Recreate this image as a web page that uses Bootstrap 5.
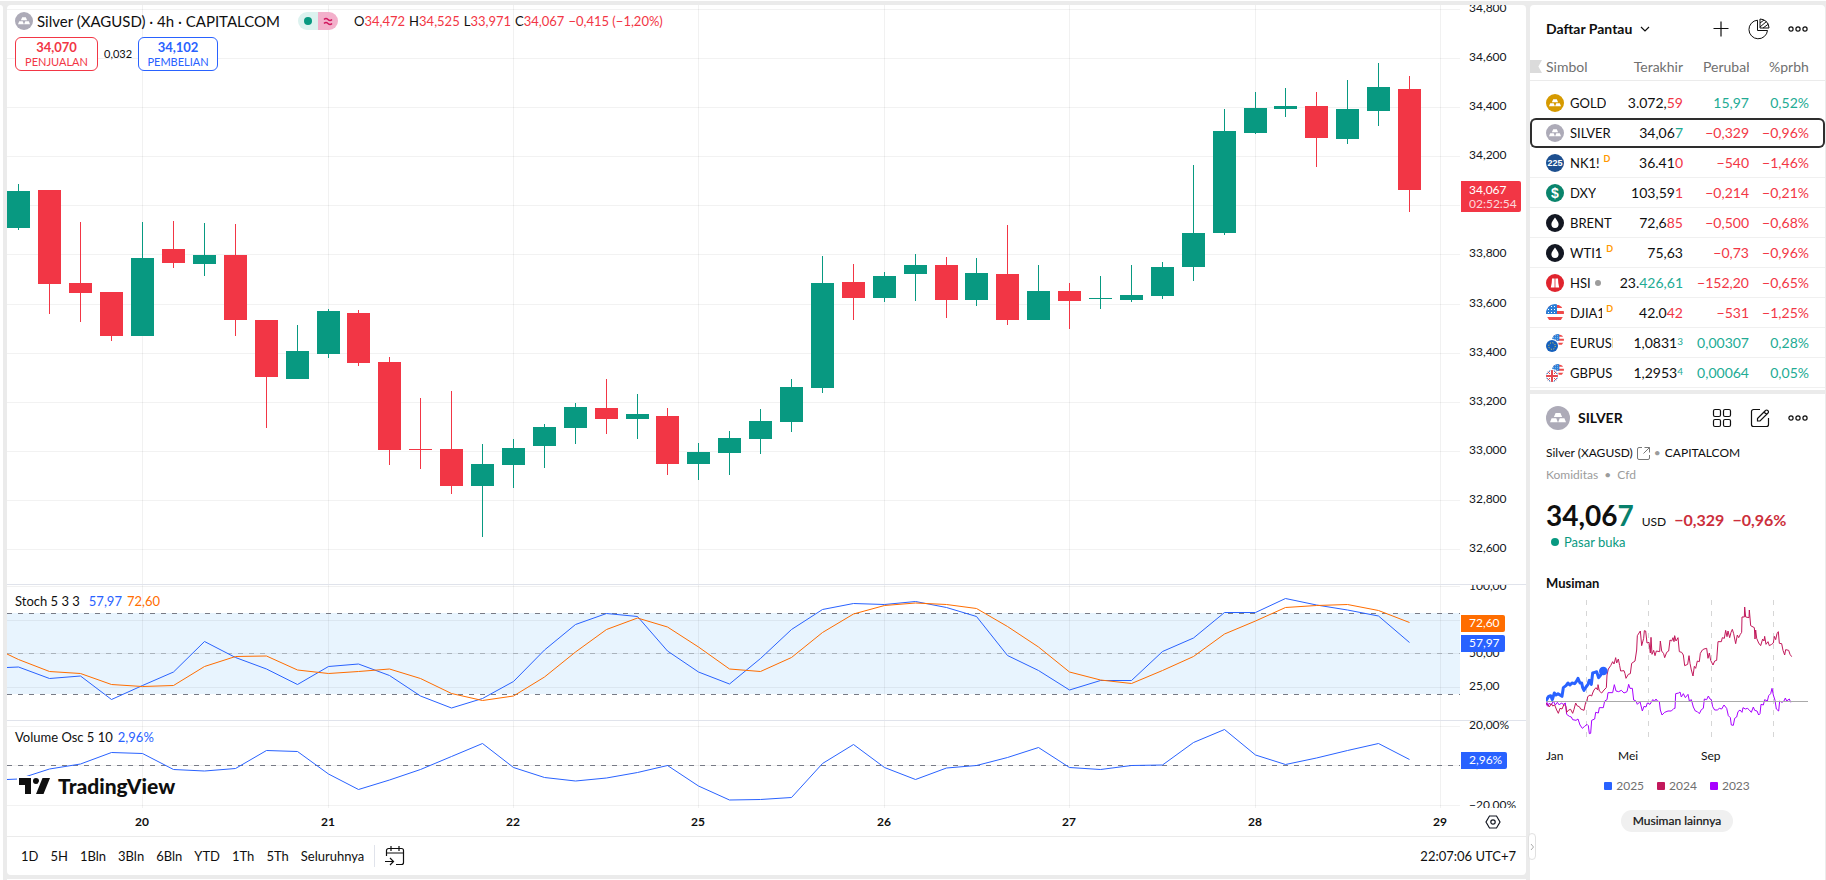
<!DOCTYPE html>
<html lang="id">
<head>
<meta charset="utf-8">
<meta name="viewport" content="width=device-width, initial-scale=1">
<title>Silver (XAGUSD) 34,067</title>
<link href="https://cdn.jsdelivr.net/npm/bootstrap@5.3.0/dist/css/bootstrap.min.css" rel="stylesheet">
<style>
:root{--up:#089981;--down:#f23645;--blue:#2962ff;--orange:#ff6d00;--ink:#0f0f0f;--frame:#ebebeb}
body{font-family:"Trebuchet MS",Lato,"Open Sans",sans-serif;font-size:14px;line-height:18px;color:var(--ink);background:var(--frame);overflow:hidden}
.workspace{border-top:1px solid #fff;padding:4px 1px 0 0;gap:4px}
.tool-edge{width:3px;border-top-right-radius:4px}
.panel{background:#fff;border-radius:4px;overflow:hidden}
.bottom-edge{height:1px;background:#fff}
.fs-12{font-size:12px;line-height:16px}
.fs-13{font-size:13px;line-height:16px}
.up{color:#22ab94}.down{color:#f23645}.blue{color:var(--blue)}.orange{color:var(--orange)}
svg{display:block;flex:none}
button{color:inherit;font:inherit}
.plain{background:none;border:0;padding:0}
/* chart */
.pane{position:relative;min-height:0;overflow:hidden}
.pane+.pane{border-top:1px solid #e0e3eb}
.pane-main{flex:1 1 0}
.pane-stoch{flex:0 0 136px}
.pane-vol{flex:0 0 88px}
.plot{position:relative;flex:1 1 0;min-width:0}
.plot>svg{width:100%;height:100%;position:absolute;inset:0}
.axis{position:relative;width:66px;font-size:12px;line-height:16px;color:#131722}
.axis span,.time-plot span{position:absolute;margin-top:-9px;left:9px}
.axis .tag{left:1px;padding:0 5px 1px 8px;color:#fff;border-radius:0 2px 2px 0;line-height:16px}
.axis .tag small{display:block;font-size:12px;line-height:14px;opacity:.8}
.axis .tag-price{padding:1px 4px 1px 8px;line-height:15px;margin-top:-15px}
.legend{position:absolute;left:8px;z-index:1}
.legend-main{top:6px}
.symbol-title{font-size:15px;line-height:20px;margin-right:2px}
.legend-stoch,.legend-vol{top:8px;gap:5px}
.status{width:20px;height:18px;display:flex;align-items:center;justify-content:center}
.status-open{background:#dcf2ef;border-radius:9px 0 0 9px}
.status-delay{background:#f3b0cb;border-radius:0 9px 9px 0}
.deal{gap:6px;margin-top:6px}
.spread{font-size:11px}
.quote{width:80px;height:34px;border:1px solid;border-radius:6px;background:#fff;line-height:14px;padding:0;font-size:11px}
.quote.sell{width:83px}
.quote b{display:block;font-size:13px;line-height:15px}
.brand{position:absolute;left:12px;bottom:9px;font-size:21px;line-height:26px;font-weight:900}
.time-axis{height:28px;font-size:12px;line-height:16px}
.time-plot{position:relative;flex:1 1 0}
.time-plot span{top:14px;width:40px;margin-left:-20px;text-align:center;font-weight:700;left:auto;margin-top:-8px}
.range-bar{height:39px;border-top:1px solid var(--frame);padding:0 10px 0 14px;gap:10px;font-size:13px}
.ranges{gap:12px}
.rule{width:1px;height:22px;background:#e0e3eb}
/* right column */
.side{width:295px;gap:4px;position:relative}
.watch{flex:0 0 385px;border-radius:4px 4px 0 0}
.watch-head{height:48px;padding:0 17px 0 16px}
.tools{gap:18px}
.quotes{table-layout:fixed;width:100%;border-collapse:separate;border-spacing:0;white-space:nowrap}
.quotes th{font-weight:400;color:#707070;height:28px;padding:0;border-bottom:1px solid var(--frame);vertical-align:middle}
.quotes tbody td{height:30px;padding:0;border-bottom:1px solid #f0f0f0;text-align:right}
.quotes tbody tr:first-child td{height:37px;padding-top:7px;border-bottom:0}
.quotes th:last-child,.quotes tbody td:last-child{padding-right:16px}
.quotes tbody .picked td{border:2px solid #2e2e2e;border-width:2px 0}
.quotes tbody .picked td:first-child{border-left-width:2px;border-radius:6px 0 0 6px}
.quotes tbody .picked td:last-child{border-right-width:2px;border-radius:0 6px 6px 0;padding-right:14px}
.picked .sym{margin-left:-2px}
.clip{display:block;overflow:hidden;margin-left:auto;text-align:left}
.sym{padding-left:16px;overflow:hidden;font-size:13px}
.ticker{overflow:hidden;margin-left:6px}
.flag-mark{width:12px;height:13px;background:#dbdbdb;clip-path:polygon(0 0,100% 0,70% 50%,100% 100%,0 100%);margin-right:4px}
.quotes sup{top:0;vertical-align:top;font-size:10px;line-height:14px}
.delay{color:#ff9800;font-weight:700;font-size:9px;line-height:9px;align-self:flex-start;margin-left:4px}
.detail{flex:1 1 0;border-radius:0;padding:12px 17px 0 16px}
.grey{color:#9c9c9c}
.full-name{margin-top:15px}
.kind{margin-top:6px}
.price{font-size:28px;line-height:32px;font-weight:700}
.change{font-size:16px;font-weight:700;color:#cc2f3c;margin-left:8px}
.market{color:#089981;margin-top:3px}
.section-title{font-size:13px;line-height:18px}
.season svg{width:100%;height:137px}
.months{padding-top:11px}
.months span{width:83px}
.months span:first-child{width:72px}
.years{gap:13px;margin-top:14px;color:#707070}
.swatch{width:8px;height:8px;border-radius:1px}
.more{background:#f0f0f0;border-radius:11px;height:22px;padding:0 12px;font-size:12px;line-height:20px;-webkit-text-stroke:.2px}
.handle{position:absolute;left:-2px;bottom:20px;width:8px;height:27px;border:1px solid #e0e0e0;border-radius:4px;background:#fff}
</style>
</head>
<body>
<svg width="0" height="0" class="position-absolute" aria-hidden="true">
  <symbol id="bars" viewBox="0 0 18 18"><path fill="#fff" d="M7.200 5.200h3.600l1.300 3H5.900zM4.200 9.200h3.500l1.200 3H3zM10.300 9.200h3.500l1.200 3H9.100z"/></symbol>
  <symbol id="us" viewBox="0 0 18 18"><path fill="#fff" d="M0 0h18v18H0z"/><path fill="#ef4b4b" d="M0 0h18v3H0zM0 6h18v3H0zM0 12h18v3H0z" transform="translate(0 1)"/><path fill="#2a7fd8" d="M0 0h11v10H0z"/><path stroke="#fff" stroke-width="1" stroke-dasharray="1 2" d="M2 2.500h9M2 5.500h9M2 8.500h9"/></symbol>
  <symbol id="dots" viewBox="0 0 20 8"><g fill="none" stroke="#0f0f0f" stroke-width="1.200"><circle cx="3" cy="4" r="2.100"/><circle cx="10" cy="4" r="2.100"/><circle cx="17" cy="4" r="2.100"/></g></symbol>
  <clipPath id="round"><circle cx="9" cy="9" r="9"/></clipPath>
  <clipPath id="r6"><circle cx="12" cy="6" r="6"/></clipPath>
  <clipPath id="r6b"><circle cx="6" cy="12" r="6"/></clipPath>
</svg>

<div class="workspace d-flex vh-100">
  <div class="tool-edge bg-white"></div>

  <main class="d-flex flex-column flex-grow-1" style="min-width:0">
    <section class="panel d-flex flex-column flex-grow-1" style="min-height:0">
      <div class="pane pane-main d-flex">
        <div class="plot">
          <svg id="plotMain" viewBox="7 5 1453 579" preserveAspectRatio="none"></svg>
          <div class="legend legend-main">
            <div class="d-flex align-items-center">
              <svg width="18" height="18" viewBox="0 0 18 18"><circle cx="9" cy="9" r="9" fill="#adabb8"/><use href="#bars" width="18" height="18"/></svg>
              <span class="symbol-title ms-1">Silver (XAGUSD) · 4h · CAPITALCOM</span>
              <span class="d-flex ms-3">
                <span class="status status-open"><svg width="8" height="8"><circle cx="4" cy="4" r="4" fill="#089981"/></svg></span>
                <span class="status status-delay"><svg width="10" height="10" fill="none" stroke="#d1175e" stroke-width="1.500"><path d="M1 3.500q2-2 4 0t4 0M1 7.500q2-2 4 0t4 0"/></svg></span>
              </span>
              <span class="fs-13 d-flex gap-1 ms-3"><span>O<span class="down">34,472</span></span><span>H<span class="down">34,525</span></span><span>L<span class="down">33,971</span></span><span>C<span class="down">34,067</span></span><span class="down">−0,415 (−1,20%)</span></span>
            </div>
            <div class="deal d-flex align-items-center">
              <button type="button" class="quote sell down"><b>34,070</b>PENJUALAN</button>
              <span class="spread">0,032</span>
              <button type="button" class="quote blue"><b>34,102</b>PEMBELIAN</button>
            </div>
          </div>
        </div>
        <div class="axis" id="axisMain"></div>
      </div>
      <div class="pane pane-stoch d-flex">
        <div class="plot">
          <svg id="plotStoch" viewBox="7 585 1453 135" preserveAspectRatio="none"></svg>
          <div class="legend legend-stoch fs-13 d-flex"><span>Stoch 5 3 3</span><span class="blue ms-1">57,97</span><span class="orange">72,60</span></div>
        </div>
        <div class="axis" id="axisStoch"></div>
      </div>
      <div class="pane pane-vol d-flex">
        <div class="plot">
          <svg id="plotVol" viewBox="7 721 1453 87" preserveAspectRatio="none"></svg>
          <div class="legend legend-vol fs-13 d-flex"><span>Volume Osc 5 10</span><span class="blue">2,96%</span></div>
          <div class="brand d-flex align-items-center gap-2">
            <svg width="31" height="16" viewBox="0 0 31 16" fill="#0f0f0f" stroke="#fff" stroke-width="4" paint-order="stroke" overflow="visible"><path d="M0 0h12v16H6V7H0z"/><circle cx="17" cy="3" r="3"/><path d="M23.500 0H31l-6.500 16H17z"/></svg>
            <span>TradingView</span>
          </div>
        </div>
        <div class="axis" id="axisVol"></div>
      </div>
      <div class="time-axis d-flex">
        <div class="time-plot" id="timeAxis"></div>
        <div class="axis d-flex align-items-center justify-content-center">
          <button type="button" class="plain" aria-label="Pengaturan skala"><svg width="16" height="14" viewBox="0 0 16 14" fill="none" stroke="#131722" stroke-width="1.200"><path d="M4.500 1h7L15 7l-3.500 6h-7L1 7z"/><circle cx="8" cy="7" r="2.200"/></svg></button>
        </div>
      </div>
      <div class="range-bar d-flex align-items-center">
        <div class="ranges d-flex">
          <button type="button" class="plain">1D</button><button type="button" class="plain">5H</button><button type="button" class="plain">1Bln</button><button type="button" class="plain">3Bln</button><button type="button" class="plain">6Bln</button><button type="button" class="plain">YTD</button><button type="button" class="plain">1Th</button><button type="button" class="plain">5Th</button><button type="button" class="plain">Seluruhnya</button>
        </div>
        <span class="rule"></span>
        <button type="button" class="plain" aria-label="Pergi ke tanggal"><svg width="20" height="20" viewBox="0 0 20 20" fill="none" stroke="#0f0f0f" stroke-width="1.200"><path d="M1.500 10V4.500a2 2 0 0 1 2-2h13a2 2 0 0 1 2 2v12a2 2 0 0 1-2 2H11M1.500 7h17M6 0v5M14 0v5M0 15.500h8M5 12l3.500 3.500L5 19"/></svg></button>
        <button type="button" class="plain ms-auto">22:07:06 UTC+7</button>
      </div>
    </section>
    <div class="bottom-edge mt-1"></div>
  </main>

  <aside class="side d-flex flex-column flex-shrink-0">
    <section class="panel watch">
      <header class="watch-head d-flex align-items-center">
        <button type="button" class="plain fw-bold d-flex align-items-center gap-2">Daftar Pantau <svg width="10" height="6" viewBox="0 0 10 6" fill="none" stroke="#0f0f0f" stroke-width="1.200"><path d="M1 1l4 4 4-4"/></svg></button>
        <div class="tools d-flex align-items-center ms-auto">
          <button type="button" class="plain" aria-label="Tambah simbol"><svg width="18" height="18" viewBox="0 0 18 18" stroke="#0f0f0f" stroke-width="1.200"><path d="M9 1.500v15M1.500 8.500h15"/></svg></button>
          <button type="button" class="plain" aria-label="Tampilan lanjutan"><svg width="22" height="22" viewBox="0 0 22 22" fill="none" stroke="#0f0f0f"><path d="M9.500 2.200a9.300 9.300 0 1 0 10 10.300h-10z"/><path d="M12 1a9 9 0 0 1 9 9h-9zM12 5l4-3M12 9l6.500-5.500M15 10l5.500-4"/></svg></button>
          <button type="button" class="plain" aria-label="Menu"><svg width="20" height="8"><use href="#dots"/></svg></button>
        </div>
      </header>
      <table class="quotes">
        <colgroup><col style="width:83px"><col style="width:70px"><col style="width:66px"><col style="width:76px"></colgroup>
        <thead><tr>
          <th><span class="d-flex align-items-center"><span class="flag-mark"></span>Simbol</span></th>
          <th class="text-end">Terakhir</th>
          <th><span class="clip" style="width:46px">Perubahan</span></th>
          <th><span class="clip" style="width:40px">%prbhn</span></th>
        </tr></thead>
        <tbody id="rows"></tbody>
      </table>
    </section>

    <section class="panel detail">
      <header class="d-flex align-items-center">
        <svg width="24" height="24" viewBox="0 0 18 18"><circle cx="9" cy="9" r="9" fill="#adabb8"/><use href="#bars" width="18" height="18"/></svg>
        <b class="ms-2">SILVER</b>
        <div class="tools d-flex align-items-center ms-auto">
          <button type="button" class="plain" aria-label="Kisi"><svg width="20" height="20" viewBox="0 0 20 20" fill="none" stroke="#0f0f0f" stroke-width="1.200"><rect x="1.500" y="1.500" width="7" height="7" rx="1.500"/><rect x="11.500" y="1.500" width="7" height="7" rx="1.500"/><rect x="1.500" y="11.500" width="7" height="7" rx="1.500"/><rect x="11.500" y="11.500" width="7" height="7" rx="1.500"/></svg></button>
          <button type="button" class="plain" aria-label="Catatan"><svg width="20" height="20" viewBox="0 0 20 20" fill="none" stroke="#0f0f0f" stroke-width="1.200"><path d="M10 1.500H3.500a2 2 0 0 0-2 2v13a2 2 0 0 0 2 2h13a2 2 0 0 0 2-2V10"/><path d="M7.500 10.500l8-8a1.500 1.500 0 0 1 2.200 0l.3.300a1.500 1.500 0 0 1 0 2.200l-8 8H7.500zM14 4l2.500 2.500"/></svg></button>
          <button type="button" class="plain" aria-label="Menu"><svg width="20" height="8"><use href="#dots"/></svg></button>
        </div>
      </header>
      <div class="full-name d-flex align-items-center fs-12 gap-1">
        <a href="#" class="d-flex align-items-center text-reset text-decoration-none gap-1">Silver (XAGUSD) <svg width="13" height="13" viewBox="0 0 13 13" fill="none" stroke="#777" stroke-width="1"><path d="M5 .5H2A1.500 1.500 0 0 0 .5 2v9A1.500 1.500 0 0 0 2 12.500h9a1.500 1.500 0 0 0 1.500-1.500V8M7.500.5h5v5M12.500.5l-6 6"/></svg></a>
        <span class="grey">•</span><span>CAPITALCOM</span>
      </div>
      <div class="kind fs-12 grey">Komiditas&nbsp; •&nbsp; Cfd</div>
      <div class="d-flex align-items-baseline mt-3">
        <span class="price">34,06<span style="color:#08806c">7</span></span>
        <span class="fs-12 ms-2">USD</span>
        <span class="change">−0,329</span><span class="change">−0,96%</span>
      </div>
      <div class="market d-flex align-items-center fs-13 ps-1 gap-1"><svg width="10" height="8"><circle cx="5" cy="4" r="4" fill="#089981"/></svg>Pasar buka</div>
      <h2 class="section-title fw-bold mb-0 mt-4">Musiman</h2>
      <div class="season mt-2">
        <svg viewBox="18 15 786 411" preserveAspectRatio="none" fill="none" stroke-linejoin="round">
          <path stroke="#d6d6d6" stroke-width="3" stroke-dasharray="15 18" d="M139.500 15v411M325.500 15v411M514.500 15v411M700.500 15v411"/>
          <polyline stroke="#a800ff" stroke-width="3" points="18,332 21,322 24,334 28,324 34,330 40,318 46,330 52,322 58,330 64,324 70,328 76,324 80,358 88,364 94,366 98,374 108,376 114,372 120,390 127,400 134,394 141,388 145,392 148,416 152,415 155,376 164,372 167,352 175,354 178,338 190,338 194,318 201,314 204,293 218,293 223,269 228,288 236,290 244,286 252,294 261,290 266,268 270,280 277,280 281,315 288,318 292,328 300,320 307,348 312,334 318,336 322,324 330,328 338,314 344,318 348,312 352,318 358,320 361,345 366,360 374,352 384,348 394,348 402,340 405,340 407,296 416,294 420,291 424,306 430,296 436,308 444,298 448,318 454,314 460,336 466,348 472,350 478,356 484,344 490,340 493,312 500,314 505,303 510,312 514,314 518,335 524,345 532,345 538,340 545,342 552,330 560,340 565,362 571,368 574,390 580,391 584,370 590,366 594,350 600,345 606,352 609,338 616,342 622,340 627,344 634,352 640,336 644,346 651,348 656,360 660,356 663,328 670,330 674,314 682,318 686,302 692,296 696,280 700,300 705,316 709,342 716,348 719,318 726,322 732,318 736,309 740,318 748,312 752,322"/>
          <polyline stroke="#c2185b" stroke-width="3" points="18,325 24,330 28,336 34,326 38,333 44,330 50,345 55,355 60,340 66,342 72,328 78,335 80,352 86,345 92,343 98,355 102,343 107,324 112,333 118,335 122,342 132,346 137,322 141,318 143,305 150,300 155,303 158,294 162,285 168,278 173,285 174,269 178,288 185,294 192,285 199,278 201,240 205,222 212,212 218,200 222,207 227,188 230,204 235,192 239,212 242,228 252,227 255,236 258,250 265,238 271,236 275,205 285,198 290,165 292,122 301,108 305,152 311,130 313,107 317,108 321,144 327,142 331,174 333,127 336,178 341,166 345,182 349,168 359,170 361,138 365,168 371,176 374,188 380,172 386,168 390,135 395,138 399,128 402,140 404,122 408,138 414,128 418,170 425,172 430,180 434,212 443,208 447,182 450,205 454,225 459,243 463,214 467,220 472,198 478,200 481,175 487,165 492,162 500,160 504,190 508,174 512,196 519,210 524,198 530,196 534,140 544,140 547,128 553,130 557,106 561,125 564,108 569,128 573,112 577,103 581,116 587,146 592,120 596,128 601,118 605,112 606,66 613,66 614,36 617,66 627,68 628,45 632,92 643,98 645,132 647,105 650,130 656,144 662,152 668,132 672,138 674,124 678,148 684,140 688,152 695,148 700,144 703,124 707,134 711,116 715,110 718,145 725,146 729,166 734,180 737,164 746,166 750,178 755,185"/>
          <path stroke="#aaa" stroke-width="3" d="M18 319.500h786"/>
          <polyline stroke="#2962ff" stroke-width="9" stroke-linecap="round" points="20,314 26,304 32,302 37,314 43,294 48,300 54,296 60,300 66,304 70,278 78,272 84,264 90,270 96,264 104,266 110,258 114,250 120,264 125,264 128,278 132,286 138,276 144,268 148,256 154,268 158,234 164,232 170,230 176,248 182,240 186,228 190,228"/>
          <circle cx="190" cy="228" r="13" fill="#2962ff"/>
        </svg>
        <div class="months d-flex fs-12"><span>Jan</span><span>Mei</span><span>Sep</span></div>
      </div>
      <div class="years d-flex justify-content-center fs-12">
        <span class="d-flex align-items-center gap-1"><i class="swatch" style="background:#2962ff"></i>2025</span>
        <span class="d-flex align-items-center gap-1"><i class="swatch" style="background:#c2185b"></i>2024</span>
        <span class="d-flex align-items-center gap-1"><i class="swatch" style="background:#a800ff"></i>2023</span>
      </div>
      <div class="text-center mt-3"><button type="button" class="plain more">Musiman lainnya</button></div>
    </section>
    <button type="button" class="handle p-0" aria-label="Sembunyikan panel"><svg width="6" height="8" viewBox="0 0 6 8" fill="none" stroke="#aaa"><path d="M2 1l2.500 3L2 7"/></svg></button>
  </aside>
</div>

<script src="https://cdn.jsdelivr.net/npm/bootstrap@5.3.0/dist/js/bootstrap.bundle.min.js"></script>
<script>
// high, body top, body bottom, low, direction
const candles = [[184,191,228,230,1],[190,190,284,314,0],[222,283,293,322,0],[292,292,336,341,0],[222,258,336,336,1],[221,249,263,268,0],[223,255,264,276,1],[224,255,320,336,0],[320,320,377,428,0],[325,351,379,379,1],[309,311,354,358,1],[310,313,363,366,0],[357,362,450,465,0],[398,449,450,469,0],[391,449,486,494,0],[444,464,486,537,1],[439,448,465,488,1],[424,427,446,468,1],[403,407,428,444,1],[379,408,419,434,0],[394,414,419,439,1],[408,416,464,475,0],[443,452,464,480,1],[431,438,453,475,1],[409,421,439,454,1],[379,387,422,432,1],[256,283,388,393,1],[264,282,298,320,0],[272,276,298,302,1],[254,265,274,301,1],[257,265,300,318,0],[258,273,300,306,1],[225,274,320,325,0],[265,291,320,320,1],[283,291,301,329,0],[276,298,299,309,1],[265,295,300,302,1],[262,267,296,299,1],[165,233,267,281,1],[109,131,233,235,1],[92,108,133,134,1],[88,106,109,117,1],[92,106,138,167,0],[80,109,139,144,1],[63,87,111,126,1],[76,89,190,212,0]];
const kLine = [667,678.5,676,699.5,685.5,672,641.5,657.5,669,684.5,666.5,664,675.5,696,708,698.5,681.5,650,624.5,613.5,616.5,651,672,684,658.5,629.5,609.5,603.5,604.5,601.5,607.5,616.5,655.5,670.5,690,680.5,680.5,651.5,638,612.5,612.5,598.5,605,610,616,642.5];
const dLine = [659.5,671.5,673.5,684.5,686.5,685.5,666.5,656.5,656,670,673.5,671.5,669,678.5,693.5,700.5,696,677,652,629.5,618,627,647,669,671.5,657.5,632.5,614,605.5,603,604.5,608.5,626.5,647,672,680,683.5,670.5,656.5,634,621,607.5,605.5,604.5,610.5,622.5];
const vol = [779,769,764,752.5,753.5,769.5,771,768.5,750.5,751.5,774,789.5,780,769.5,756.5,743.5,767.5,777.5,781,778,772.5,765.5,786,800,799.5,797.5,763.5,744.5,767.5,779.5,768,765.5,757.5,747.5,767.5,769.5,765.5,765,742.5,729.5,755,764.5,758,750.5,743.5,759.5];
const barX = i => Math.round(142.1 + 30.902 * (i - 4));
const days = [[20,4],[21,10],[22,16],[25,22],[26,28],[27,34],[28,40],[29,46]];
const hline = (y, c = '#f2f2f2', dash = '') => `<path d="M7 ${y + .5}H1460" stroke="${c}" ${dash && `stroke-dasharray="${dash}"`}/>`;
const vlines = (a, b) => days.map(d => `<path d="M${barX(d[1]) + .5} ${a}V${b}" stroke="#0f0f0f" stroke-opacity=".06"/>`).join('');
const poly = (first, data, c) => `<polyline fill="none" stroke="${c}" points="7,${first} ${data.map((y, i) => (barX(i) + .5) + ',' + y).join(' ')}"/>`;
const put = (id, html) => document.getElementById(id).innerHTML = html;

const levels = [9,58,107,156,205,254,304,353,402,451,500,549];
put('plotMain', levels.map(y => hline(y)).join('') + vlines(5, 584) + candles.map(([h, t, b, l, up], i) => {
  const x = barX(i), c = up ? '#089981' : '#f23645';
  return `<path fill="${c}" d="M${x} ${h}h1V${l}h-1z"/><path fill="${c}" d="M${x - 11} ${t}h23V${b}h-23z"/>`;
}).join(''));
put('plotStoch', '<path fill="#2196f3" fill-opacity=".1" d="M7 613h1453v81H7z"/>' + [586,620,653,687].map(y => hline(y, 'rgba(15,15,15,.06)')).join('') + vlines(585, 720)
  + hline(613, '#787b86', '5 6') + hline(653, '#a9b2bb', '5 6') + hline(694, '#787b86', '5 6') + poly(667.5, kLine, '#2962ff') + poly(654, dLine, '#ff6d00'));
put('plotVol', [726,765,805].map(y => hline(y)).join('') + vlines(721, 808) + hline(765, '#787b86', '5 6') + poly(779.5, vol, '#2962ff'));

// axis labels sit at a share of their pane's height
const marks = (top, height, list) => list.map(([y, t]) => `<span style="top:${(y - top) / height * 100}%">${t}</span>`).join('');
const tag = (top, height, y, c, t, cls = '') => `<span class="tag ${cls}" style="top:${(y - top) / height * 100}%;background:${c}">${t}</span>`;
const price = i => ((34800 - i * 200) / 1000).toFixed(3).replace('.', ',');
put('axisMain', marks(5, 579, levels.map((y, i) => [y, price(i)]).filter(m => m[1] !== '34,000')) + tag(5, 579, 196, '#f23645', '34,067<small>02:52:54</small>', 'tag-price'));
put('axisStoch', marks(585, 135, [[587,'100,00'],[620,'75,00'],[654,'50,00'],[687,'25,00']]) + tag(585, 135, 624, '#ff6d00', '72,60') + tag(585, 135, 644, '#2962ff', '57,97'));
put('axisVol', marks(721, 87, [[726,'20,00%'],[765,'0,00%'],[806,'−20,00%']]) + tag(721, 87, 761, '#2962ff', '2,96%'));
put('timeAxis', days.map(d => `<span style="left:${(barX(d[1]) - 7) / 1453 * 100}%">${d[0]}</span>`).join(''));

const disc = (c, inner) => `<svg width="18" height="18" viewBox="0 0 18 18"><circle cx="9" cy="9" r="9" fill="${c}"/>${inner}</svg>`;
const bars = '<use href="#bars" width="18" height="18"/>';
const drop = '<path fill="#fff" d="M9 3.500c2 3 3.600 4.600 3.600 6.800a3.600 3.600 0 0 1-7.200 0C5.400 8.100 7 6.500 9 3.500z"/>';
const label = (t, s) => `<text x="9" y="${s > 9 ? 14 : 12}" fill="#fff" font-size="${s}" font-weight="700" text-anchor="middle" font-family="Liberation Sans, sans-serif">${t}</text>`;
const pair = inner => `<svg width="18" height="18" viewBox="0 0 18 18"><g clip-path="url(#r6)"><use href="#us" x="6" width="12" height="12"/></g><circle cx="6" cy="12" r="7" fill="#fff"/>${inner}</svg>`;
const eu = pair('<circle cx="6" cy="12" r="6" fill="#1560bd"/><circle cx="6" cy="12" r="3.300" fill="none" stroke="#ffd83d" stroke-dasharray="1 1.600"/>');
const gb = pair('<g clip-path="url(#r6b)"><path fill="#2a5fae" d="M0 6h12v12H0z"/><path stroke="#fff" stroke-width="2.400" d="M0 6l12 12M12 6L0 18"/><path stroke="#e34850" d="M0 6l12 12M12 6L0 18"/><path stroke="#fff" stroke-width="4" d="M6 6v12M0 12h12"/><path stroke="#e34850" stroke-width="2" d="M6 6v12M0 12h12"/></g>');
const D = '<span class="delay">D</span>';
const list = [
  [disc('#d69a00', bars), 'GOLD', '', '3.072,<span class="down">59</span>', '15,97', '0,52%', 'up'],
  [disc('#adabb8', bars), 'SILVER', '', '34,06<span class="up">7</span>', '−0,329', '−0,96%', 'down'],
  [disc('#1d4f8f', label('225', 9)), 'NK1!', D, '36.41<span class="down">0</span>', '−540', '−1,46%', 'down'],
  [disc('#0a846c', label('$', 14)), 'DXY', '', '103,59<span class="down">1</span>', '−0,214', '−0,21%', 'down'],
  [disc('#131722', drop), 'BRENT', '', '72,6<span class="down">85</span>', '−0,500', '−0,68%', 'down'],
  [disc('#131722', drop), 'WTI1', D, '75,63', '−0,73', '−0,96%', 'down'],
  [disc('#e0242e', '<path fill="#fff" d="M6 4.500h2.600v9H4.800q1.200-4 1.200-9zM9.400 4.500H12q0 5 1.200 9H9.400z"/>'), 'HSI', '<svg class="ms-1" width="6" height="6"><circle cx="3" cy="3" r="3" fill="#9c9c9c"/></svg>', '23.<span class="up">426,61</span>', '−152,20', '−0,65%', 'down'],
  ['<svg width="18" height="18" viewBox="0 0 18 18"><g clip-path="url(#round)"><use href="#us" width="18" height="18"/></g></svg>', 'DJIA1', D, '42.0<span class="down">42</span>', '−531', '−1,25%', 'down'],
  [eu, 'EURUSD', '', '1,0831<sup class="up">3</sup>', '0,00307', '0,28%', 'up'],
  [gb, 'GBPUSD', '', '1,2953<sup class="up">4</sup>', '0,00064', '0,05%', 'up']];
put('rows', list.map(([icon, name, extra, last, chg, pct, dir]) => `<tr class="${name === 'SILVER' ? 'picked' : ''}"><td><div class="sym d-flex align-items-center">${icon}<span class="ticker">${name}</span>${extra}</div></td><td>${last}</td><td class="${dir}">${chg}</td><td class="${dir}">${pct}</td></tr>`).join(''));
</script>
</body>
</html>
